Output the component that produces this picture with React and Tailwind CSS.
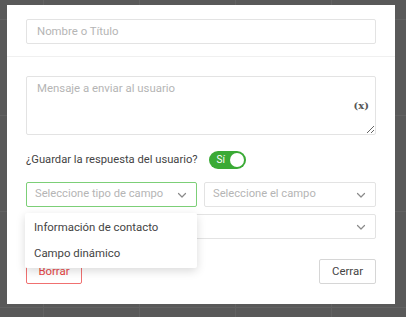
import React from "react";

function Chevron() {
  return (
    <svg width="12" height="12" viewBox="0 0 12 12" fill="none" stroke="#8a8a8a" strokeWidth="1.2" strokeLinecap="round" strokeLinejoin="round">
      <path d="M2.5 4.5 L6 8 L9.5 4.5" />
    </svg>
  );
}

export default function App() {
  return (
    <div
      className="w-[406px] h-[317px] overflow-hidden bg-[#595959] bg-[linear-gradient(to_right,#626262_1px,transparent_1px),linear-gradient(to_bottom,#626262_1px,transparent_1px)] bg-[size:96px_96px] bg-[position:43px_19px] pt-[5px] pl-[7px]"
      style={{ fontFamily: "Roboto, 'Liberation Sans', sans-serif" }}
    >
      <div className="w-[388px] h-[299px] bg-white flex flex-col">
        <div className="px-[19px] pt-[14px] pb-[12px] border-b border-[#f0f0f0]">
          <div className="h-[25px] border border-[#e3e3e3] rounded-[2px] flex items-center px-[10px] text-[11.4px] text-[#b5b5b5]">
            Nombre o Título
          </div>
        </div>
        <div className="px-[19px] pt-[19px] flex flex-col">
          <div className="relative h-[59px]">
            <textarea
              className="w-full h-[59px] border border-[#e3e3e3] rounded-[2px] px-[10px] pt-[3px] text-[11.4px] text-[#333] placeholder:text-[#b5b5b5] outline-none resize-y block"
              placeholder="Mensaje a enviar al usuario"
              readOnly
            />
            <span
              className="absolute right-[7px] top-[22px] text-[10px] font-bold text-[#555]"
              style={{ fontFamily: "'DejaVu Serif', 'Liberation Serif', serif" }}
            >
              (x)
            </span>
          </div>
          <div className="flex items-center mt-[16px] h-[18px]">
            <span className="text-[11.2px] text-[#444]">¿Guardar la respuesta del usuario?</span>
            <div className="ml-[11px] w-[37px] h-[18px] rounded-full bg-[#3aaa35] flex items-center justify-between pl-[8px] pr-[2px]">
              <span className="text-[10px] text-white leading-none">Sí</span>
              <span className="w-[14px] h-[14px] rounded-full bg-white"></span>
            </div>
          </div>
          <div className="flex gap-[7px] mt-[13px]">
            <div className="relative w-[171px] h-[25px]">
              <div className="h-full border border-[#7ccf77] rounded-[2px] flex items-center justify-between px-[8px] text-[11.2px] text-[#b5b5b5]">
                <span>Seleccione tipo de campo</span>
                <Chevron />
              </div>
              <div className="absolute left-[-1px] top-[31px] w-[172px] h-[55px] bg-white rounded-[2px] shadow-[0_3px_10px_rgba(0,0,0,0.15)] z-10 flex flex-col pt-[2px] text-[11.4px] text-[#444]">
                <div className="h-[26px] flex items-center px-[9px]">Información de contacto</div>
                <div className="h-[26px] flex items-center px-[9px]">Campo dinámico</div>
              </div>
            </div>
            <div className="flex-1 h-[25px] border border-[#e3e3e3] rounded-[2px] flex items-center justify-between px-[8px] text-[11.2px] text-[#b5b5b5]">
              <span>Seleccione el campo</span>
              <Chevron />
            </div>
          </div>
          <div className="mt-[7px] h-[25px] border border-[#e3e3e3] rounded-[2px] flex items-center justify-end px-[8px]">
            <Chevron />
          </div>
          <div className="flex justify-between mt-[20px]">
            <div className="w-[56px] h-[25px] border border-[#f07070] rounded-[2px] flex items-center justify-center text-[11.4px] text-[#e84545]">
              Borrar
            </div>
            <div className="w-[57px] h-[25px] border border-[#d6d6d6] rounded-[2px] flex items-center justify-center text-[11.4px] text-[#444]">
              Cerrar
            </div>
          </div>
        </div>
      </div>
    </div>
  );
}
